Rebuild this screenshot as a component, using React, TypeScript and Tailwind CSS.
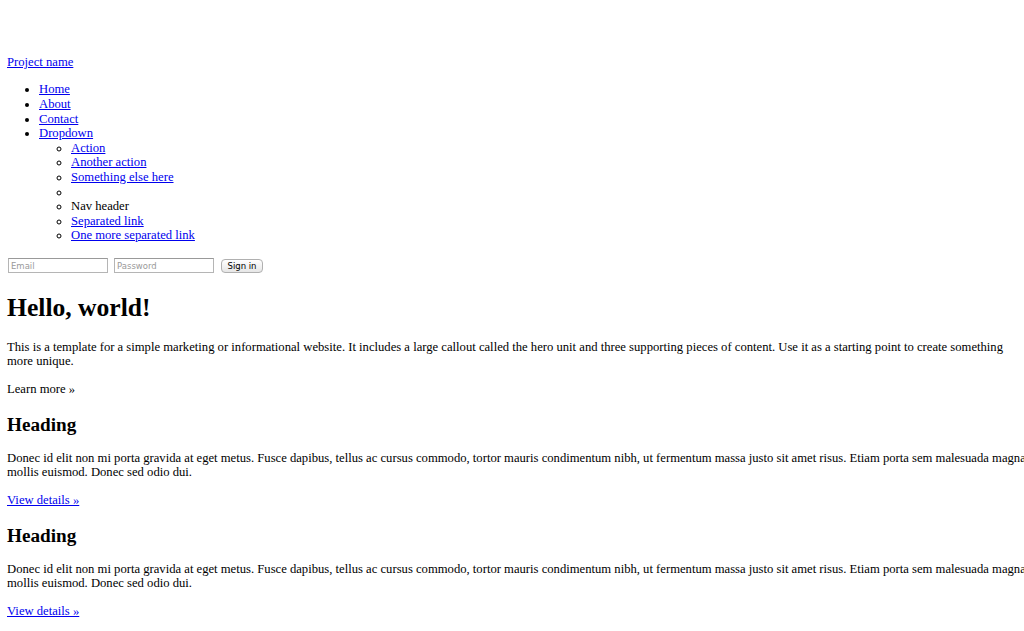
import React from 'react';

const serif = { fontFamily: '"Liberation Serif", "Times New Roman", serif' };
const sans = { fontFamily: '"DejaVu Sans", "Liberation Sans", sans-serif' };

const navLinks = ['Home', 'About', 'Contact'];

const App: React.FC = () => {
  return (
    <div className="w-[1024px] h-[631px] overflow-hidden bg-white text-black">
      <div className="w-[1036px] pt-[55px] px-[7px] text-[12.65px] leading-[14.6px]" style={serif}>
        <a href="#" className="text-[#0000ee] underline">Project name</a>

        <ul className="list-disc pl-[32px] mt-[12.8px] mb-[14.8px]">
          {navLinks.map((item) => (
            <li key={item}>
              <a href="#" className="text-[#0000ee] underline">{item}</a>
            </li>
          ))}
          <li>
            <a href="#" className="text-[#0000ee] underline">Dropdown</a>
            <ul className="list-[circle] pl-[32px]">
              <li><a href="#" className="text-[#0000ee] underline">Action</a></li>
              <li><a href="#" className="text-[#0000ee] underline">Another action</a></li>
              <li><a href="#" className="text-[#0000ee] underline">Something else here</a></li>
              <li className="h-[14.6px]"></li>
              <li>Nav header</li>
              <li><a href="#" className="text-[#0000ee] underline">Separated link</a></li>
              <li><a href="#" className="text-[#0000ee] underline">One more separated link</a></li>
            </ul>
          </li>
        </ul>

        {/* sign in form */}
        <form className="flex items-center gap-[6px] pl-[1px] h-[16px]" style={sans}>
          <input
            type="text"
            placeholder="Email"
            className="w-[100px] h-[15px] border border-[#b5b5b5] border-t-[#999999] px-[2px] text-[8.5px] placeholder:text-[#9a9a9a]"
          />
          <input
            type="password"
            placeholder="Password"
            className="w-[100px] h-[15px] border border-[#b5b5b5] border-t-[#999999] px-[2px] text-[8.5px] placeholder:text-[#9a9a9a]"
          />
          <button
            type="button"
            className="ml-[1px] h-[14px] w-[42px] rounded-[4px] border border-[#b0b0b0] bg-gradient-to-b from-white to-[#e6e6e6] text-[8.5px] leading-[12px] text-black"
          >
            Sign in
          </button>
        </form>

        <h1 className="text-[25.6px] leading-[30px] font-bold mt-[19px] mb-[17px]">Hello, world!</h1>
        <p className="mb-[12.8px]">
          This is a template for a simple marketing or informational website. It includes a large callout called the hero unit and three supporting pieces of content. Use it as a starting point to create something more unique.
        </p>
        <p className="mb-[12.8px]">Learn more »</p>

        {[0, 1].map((i) => (
          <div key={i}>
            <h2 className="text-[19.2px] leading-[22px] font-bold mt-[17.5px] mb-[15px]">Heading</h2>
            <p className="mb-[12.8px]">
              Donec id elit non mi porta gravida at eget metus. Fusce dapibus, tellus ac cursus commodo, tortor mauris condimentum nibh, ut fermentum massa justo sit amet risus. Etiam porta sem malesuada magna mollis euismod. Donec sed odio dui.
            </p>
            <p className="mb-[12.8px]">
              <a href="#" className="text-[#0000ee] underline">View details »</a>
            </p>
          </div>
        ))}
      </div>
    </div>
  );
};

export default App;
